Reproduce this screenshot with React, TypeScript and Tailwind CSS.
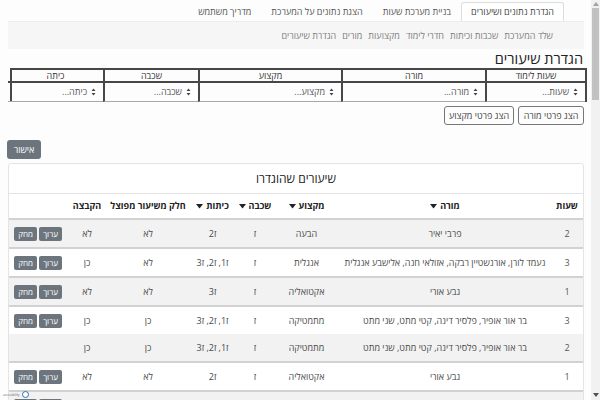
import React from "react";

const font = { fontFamily: '"Open Sans", "Liberation Sans", "DejaVu Sans", sans-serif' };

type Row = {
  hours: string;
  teacher: string;
  subject: string;
  grade: string;
  classes: string;
  split: string;
  group: string;
  actions: boolean;
  border: boolean;
};

const rows: Row[] = [
  { hours: "2", teacher: "פרבי יאיר", subject: "הבעה", grade: "ז", classes: "ז2", split: "לא", group: "לא", actions: true, border: false },
  { hours: "3", teacher: "נעמד לורן, אורנשטיין רבקה, אזולאי חנה, אלישבע אנגלית", subject: "אנגלית", grade: "ז", classes: "ז1, ז2, ז3", split: "לא", group: "כן", actions: true, border: true },
  { hours: "1", teacher: "גבע אורי", subject: "אקטואליה", grade: "ז", classes: "ז3", split: "לא", group: "לא", actions: true, border: true },
  { hours: "3", teacher: "בר אור אופיר, פלסיר דינה, קטי מתט, שני מתט", subject: "מתמטיקה", grade: "ז", classes: "ז1, ז2, ז3", split: "כן", group: "כן", actions: true, border: true },
  { hours: "2", teacher: "בר אור אופיר, פלסיר דינה, קטי מתט, שני מתט", subject: "מתמטיקה", grade: "ז", classes: "ז1, ז2, ז3", split: "כן", group: "כן", actions: false, border: false },
  { hours: "1", teacher: "גבע אורי", subject: "אקטואליה", grade: "ז", classes: "ז2", split: "לא", group: "לא", actions: true, border: true },
  { hours: "2", teacher: "גבע אורי", subject: "אקטואליה", grade: "ז", classes: "ז1", split: "לא", group: "לא", actions: true, border: true },
];

const SortArrow = () => (
  <svg width="7" height="5" viewBox="0 0 7 5" className="shrink-0">
    <path d="M0 0 L7 0 L3.5 4.5 Z" fill="#222" />
  </svg>
);

const SelectArrows = () => (
  <svg width="5" height="8" viewBox="0 0 5 8" className="shrink-0">
    <path d="M0.5 3 L2.5 0.5 L4.5 3 Z M0.5 5 L2.5 7.5 L4.5 5 Z" fill="#444" />
  </svg>
);

const tabs = ["הגדרת נתונים ושיעורים", "בניית מערכת שעות", "הצגת נתונים על המערכת", "מדריך משתמש"];
const subLinks = ["שלד המערכת", "שכבות וכיתות", "חדרי לימוד", "מקצועות", "מורים", "הגדרת שיעורים"];
const filters = [
  { label: "שעות לימוד", placeholder: "שעות..." },
  { label: "מורה", placeholder: "מורה..." },
  { label: "מקצוע", placeholder: "מקצוע..." },
  { label: "שכבה", placeholder: "שכבה..." },
  { label: "כיתה", placeholder: "כיתה..." },
];

const cols = "grid grid-cols-[32px_212px_65px_38px_47px_82px_40px_58px]";

export default function App() {
  return (
    <div className="flex h-[400px] w-[600px] overflow-hidden bg-[#fdfdfd]" style={font}>
      <main dir="rtl" className="relative w-[591px] shrink-0">
        {/* Tabs */}
        <div className="mr-[27px] flex h-[21px] items-end pt-[2px] text-[9px]">
          {tabs.map((t, i) => (
            <div
              key={t}
              className={
                i === 0
                  ? "flex h-[19px] items-center rounded-t-[3px] border border-b-0 border-[#dcdcdc] bg-white px-[9px] text-[#444]"
                  : "flex h-[19px] items-center px-[10px] text-[#555]"
              }
            >
              {t}
            </div>
          ))}
        </div>

        {/* Sub navigation */}
        <div className="ml-[8px] mr-[7px] flex h-[28px] items-center gap-[6px] border-t border-[#ececec] bg-[#f6f6f6] pr-[31px] text-[9px] text-[#808080]">
          {subLinks.map((l) => (
            <span key={l}>{l}</span>
          ))}
        </div>

        <h1 className="mr-[8px] h-[19px] text-[14.5px] leading-[19px] text-[#222]">הגדרת שיעורים</h1>

        {/* Filters */}
        <div className="ml-[10px] mr-[4px] grid grid-cols-[100px_144px_143px_95px_95px] border-x-2 border-t-2 border-[#474747]">
          {filters.map((f, i) => (
            <div
              key={f.label}
              className={`flex h-[13px] items-center justify-center border-b-2 border-[#474747] text-[9px] leading-none text-[#333] ${i < 4 ? "border-l-2" : ""}`}
            >
              {f.label}
            </div>
          ))}
          {filters.map((f, i) => (
            <div
              key={f.placeholder}
              className={`flex h-[19px] items-center gap-[4px] border-b border-[#a8a8a8] pr-[7px] text-[9px] text-[#555] ${i < 4 ? "border-l-2 border-l-[#474747]" : ""}`}
            >
              <SelectArrows />
              <span>{f.placeholder}</span>
            </div>
          ))}
        </div>

        <div className="mr-[7px] mt-[4px] flex gap-[4px] text-[9px] text-[#444]">
          <button className="h-[19px] w-[66px] rounded-[3px] border border-[#777]">הצג פרטי מורה</button>
          <button className="h-[19px] w-[70px] rounded-[3px] border border-[#777]">הצג פרטי מקצוע</button>
        </div>

        <div className="ml-[7px] mt-[15px] flex justify-end">
          <button className="h-[19px] w-[34px] rounded-[3px] bg-[#6c757d] text-[9px] text-white">אישור</button>
        </div>

        {/* Lessons card */}
        <div className="ml-[8px] mr-[7px] mt-[4px] rounded-[3px] border border-[#e4e4e4] bg-white">
          <div className="flex h-[30px] items-center justify-center border-b border-[#e4e4e4] text-[12px] text-[#222]">
            שיעורים שהוגדרו
          </div>
          <div className={`${cols} h-[26px] items-center border-b-2 border-[#d2d2d2] text-[9px] font-bold text-[#222]`}>
            <div className="text-center">שעות</div>
            <div className="flex items-center justify-center gap-[3px]">מורה<SortArrow /></div>
            <div className="flex items-center justify-center gap-[3px]">מקצוע<SortArrow /></div>
            <div className="flex items-center justify-center gap-[3px]">שכבה<SortArrow /></div>
            <div className="flex items-center justify-center gap-[3px]">כיתות<SortArrow /></div>
            <div className="text-center">חלק משיעור מפוצל</div>
            <div className="text-center">הקבצה</div>
            <div />
          </div>
          {rows.map((r, i) => (
            <div
              key={i}
              className={`${cols} ${r.border ? "h-[29px] border-t-2 border-[#d2d2d2]" : "h-[27px]"} items-center text-[9px] text-[#4a4a4a] ${i % 2 === 0 ? "bg-[#f2f2f2]" : "bg-white"}`}
            >
              <div className="text-center text-[#555]">{r.hours}</div>
              <div className="whitespace-nowrap text-center">{r.teacher}</div>
              <div className="text-center">{r.subject}</div>
              <div className="text-center">{r.grade}</div>
              <div className="text-center">{r.classes}</div>
              <div className="text-center">{r.split}</div>
              <div className="text-center">{r.group}</div>
              <div className="flex justify-center gap-[2px]">
                {r.actions && (
                  <>
                    <button className="h-[14px] w-[23px] rounded-[2px] bg-[#6c757d] text-[8px] leading-none text-white">ערוך</button>
                    <button className="h-[14px] w-[23px] rounded-[2px] bg-[#6c757d] text-[8px] leading-none text-white">מחק</button>
                  </>
                )}
              </div>
            </div>
          ))}
        </div>

        {/* accessibility badge */}
        <div dir="ltr" className="absolute bottom-[2px] left-[3px] flex items-center gap-[2px] text-[3px] leading-[4px] text-[#666]">
          <span>accessibility</span>
          <div className="h-[7px] w-[7px] rounded-full border border-[#2a6fb5] bg-white" />
        </div>
      </main>

      {/* Scrollbar */}
      <div className="flex w-[9px] flex-col items-center bg-[#f1f1f1]">
        <div className="mt-[2px] h-0 w-0 border-x-[3px] border-b-[4px] border-x-transparent border-b-[#a3a3a3]" />
        <div className="mt-[2px] h-[92px] w-[7px] bg-[#c1c1c1]" />
        <div className="flex-1" />
        <div className="mb-[3px] h-0 w-0 border-x-[3px] border-t-[4px] border-x-transparent border-t-[#505050]" />
      </div>
    </div>
  );
}
